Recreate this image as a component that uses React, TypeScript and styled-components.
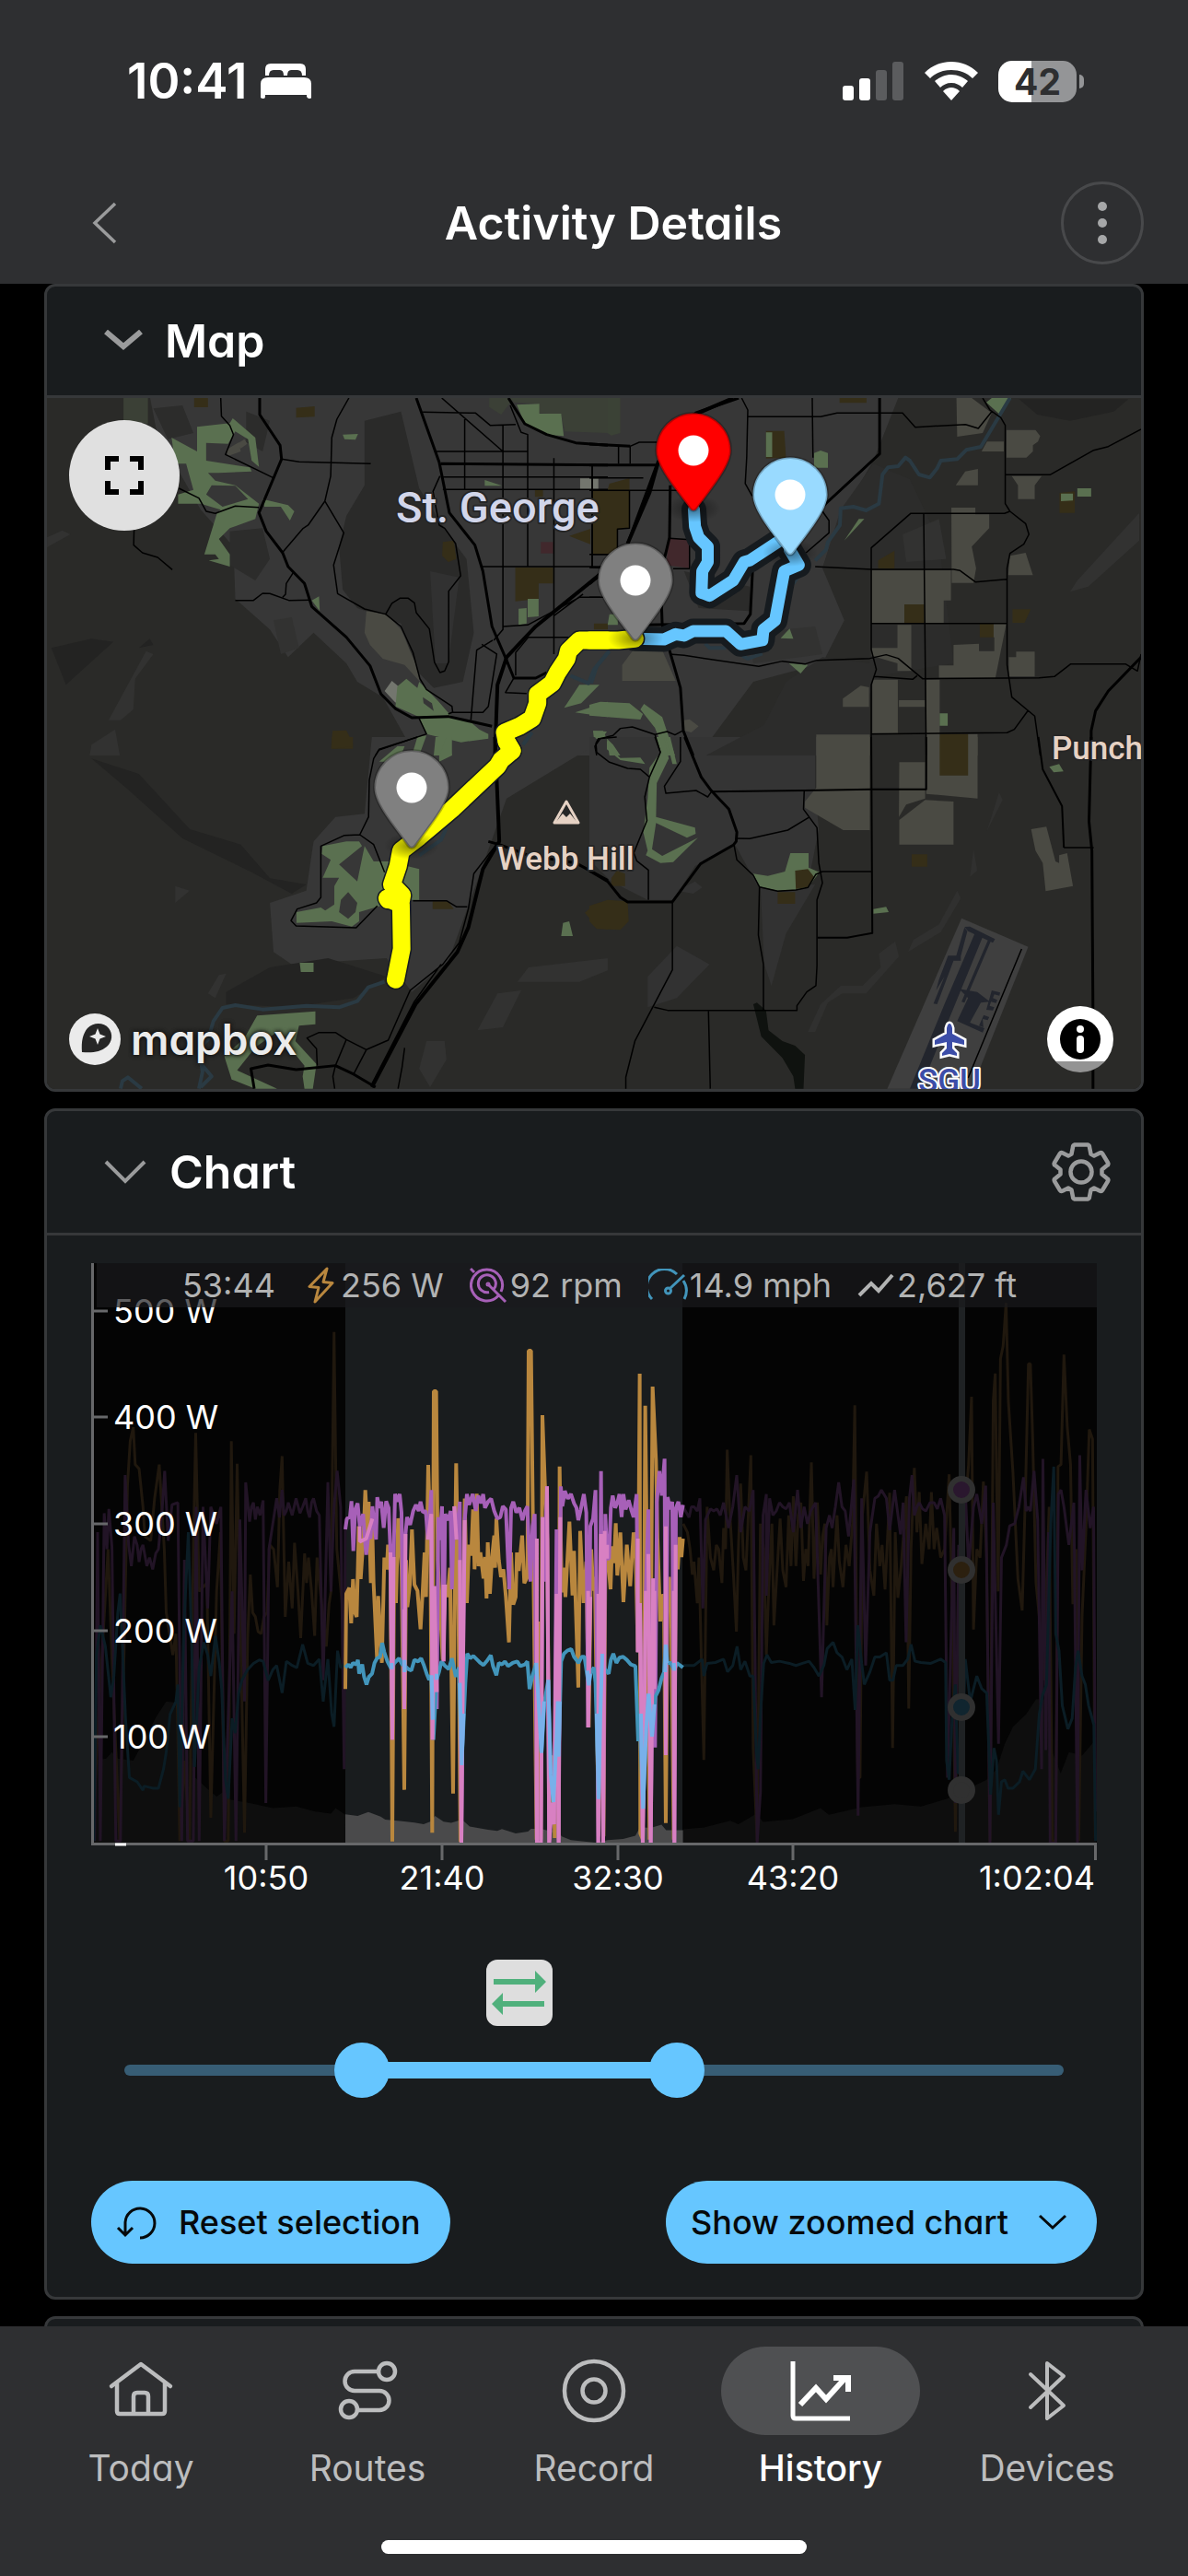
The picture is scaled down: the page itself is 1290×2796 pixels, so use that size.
import React, { useState } from "react";
import styled, { createGlobalStyle } from "styled-components";

const c = {
  bar: "#2e2f31",
  card: "#191c1e",
  line: "#36383a",
  accent: "#66c6ff",
  track: "#375d75",
  icon: "#9a9b9c",
  muted: "#bcbdbe",
  orange: "#b9873e",
  purple: "#a760b8",
  pink: "#d880c2",
  blue: "#4295bb",
  sky: "#79b0ea",
};

const GlobalStyle = createGlobalStyle`
  * { box-sizing: border-box; }
  body {
    margin: 0;
    background: #000;
    color: #fff;
    font-family: Inter, "Liberation Sans", sans-serif;
    font-feature-settings: "cv11";
  }
  button, input { font: inherit; font-feature-settings: inherit; color: inherit; }
  svg { display: block; flex: none; }
`;

/* ---------- page frame ---------- */

const Page = styled.div`
  display: flex;
  flex-direction: column;
  height: 100vh;
  overflow: hidden;
`;

const Header = styled.header`
  background: ${c.bar};
`;

const StatusBar = styled.div`
  display: flex;
  justify-content: space-between;
  align-items: center;
  height: 176px;
  padding: 0 113px 0 138px;
`;

const StatusGroup = styled.div<{ $gap: number }>`
  display: flex;
  align-items: center;
  gap: ${(p) => p.$gap}px;
`;

const Clock = styled.time`
  font-size: 53px;
  line-height: 60px;
  font-weight: 600;
`;

const Battery = styled.div`
  display: flex;
  align-items: center;
  gap: 3px;
`;

const BatteryBody = styled.div`
  display: grid;
  place-items: center;
  width: 85px;
  height: 45px;
  border-radius: 15px;
  background: linear-gradient(90deg, #fff 42%, #949597 42%);
  color: ${c.bar};
  font-size: 39px;
  line-height: 45px;
  font-weight: 700;
`;

const BatteryTip = styled.div`
  width: 5px;
  height: 15px;
  border-radius: 0 6px 6px 0;
  background: #949597;
`;

const TitleBar = styled.div`
  display: grid;
  grid-template-columns: 90px 1fr 90px;
  align-items: center;
  height: 132px;
  padding: 0 48px 0 90px;
`;

const BackButton = styled.button`
  justify-self: start;
  padding: 12px 9px;
  border: 0;
  background: none;
`;

const Title = styled.h1`
  margin: 0;
  text-align: center;
  font-size: 50px;
  line-height: 60px;
  font-weight: 600;
`;

const MoreButton = styled.button`
  display: grid;
  place-items: center;
  width: 90px;
  height: 90px;
  padding: 0;
  border: 3px solid #48494b;
  border-radius: 50%;
  background: none;
`;

const Content = styled.main`
  flex: 1;
  min-height: 0;
  display: flex;
  flex-direction: column;
  gap: 18px;
  padding: 0 48px;
  overflow: hidden auto;
  scrollbar-width: none;
`;

/* ---------- cards ---------- */

const Card = styled.section`
  flex: none;
  border: 3px solid ${c.line};
  border-radius: 12px;
  background: ${c.card};
  overflow: hidden;
`;

const NextCard = styled(Card)`
  height: 132px;
`;

const CardHeader = styled.div<{ $height: number; $gap: number }>`
  display: flex;
  align-items: center;
  gap: ${(p) => p.$gap}px;
  height: ${(p) => p.$height}px;
  padding: 0 33px 0 62px;
  border-bottom: 3px solid ${c.line};
`;

const CardTitle = styled.h2`
  flex: 1;
  margin: 0;
  font-size: 50px;
  line-height: 60px;
  font-weight: 600;
`;

const IconButton = styled.button`
  padding: 0;
  border: 0;
  background: none;
`;

/* ---------- map ---------- */

const MapFrame = styled.div`
  position: relative;
  height: 750px;
  background: #2a2a28;
`;

const MapSvg = styled.svg`
  width: 100%;
  height: 100%;
`;

const MapLabel = styled.text<{ $size: number }>`
  font-family: Roboto, sans-serif;
  font-size: ${(p) => p.$size}px;
  font-weight: 500;
  paint-order: stroke;
  stroke-width: 4px;
  stroke-linejoin: round;
`;

const FullscreenButton = styled.button`
  position: absolute;
  top: 24px;
  left: 24px;
  display: grid;
  place-items: center;
  width: 120px;
  height: 120px;
  padding: 0;
  border: 0;
  border-radius: 50%;
  background: #e0e0e0;
`;

const MapboxLogo = styled.a`
  position: absolute;
  left: 24px;
  bottom: 24px;
  display: flex;
  align-items: center;
  gap: 11px;
  color: #ebebeb;
  text-decoration: none;
  font-size: 46px;
  line-height: 60px;
  font-weight: 600;
  text-shadow: 0 0 5px #111, 0 0 5px #111;
`;

const InfoButton = styled.button`
  position: absolute;
  right: 30px;
  bottom: 18px;
  display: grid;
  place-items: center;
  width: 72px;
  height: 72px;
  padding: 0;
  border: 0;
  border-radius: 36px;
  background: linear-gradient(#fff 60px, #939393 60px);
`;

/* ---------- chart ---------- */

const ChartBody = styled.div`
  padding: 30px 48px 36px;
`;

const ChartFrame = styled.div`
  position: relative;
`;

const ChartSvg = styled.svg`
  width: 100%;
  height: auto;
`;

const AxisLabel = styled.text`
  fill: #fff;
  font-size: 36px;
`;

const Legend = styled.ul`
  position: absolute;
  top: 0;
  left: 6px;
  right: 0;
  display: flex;
  justify-content: center;
  align-items: center;
  gap: 28px;
  height: 48px;
  margin: 0;
  padding: 0 0 0 6px;
  list-style: none;
  background: rgba(25, 26, 28, 0.7);
  color: #b2b3b3;
  font-size: 36px;
  line-height: 48px;
`;

const LegendItem = styled.li<{ $gap: number }>`
  display: flex;
  align-items: center;
  gap: ${(p) => p.$gap}px;
  white-space: nowrap;
`;

const RangeArea = styled.div`
  padding: 56px 36px 90px;
`;

const SwapButton = styled.button`
  display: grid;
  place-items: center;
  width: 72px;
  height: 72px;
  padding: 0;
  border: 0;
  border-radius: 12px;
  background: #dedede;
`;

const DualRange = styled.div`
  position: relative;
  height: 60px;
  margin: 18px -30px 0;
`;

const Track = styled.div`
  position: absolute;
  inset: 24px 30px;
  border-radius: 6px;
  background: ${c.track};
`;

const TrackFill = styled.div`
  position: absolute;
  top: -3px;
  bottom: -3px;
  background: ${c.accent};
`;

const Range = styled.input`
  position: absolute;
  inset: 0;
  width: 100%;
  height: 60px;
  margin: 0;
  background: none;
  appearance: none;
  pointer-events: none;
  &::-webkit-slider-thumb {
    appearance: none;
    width: 60px;
    height: 60px;
    border: 0;
    border-radius: 50%;
    background: ${c.accent};
    pointer-events: auto;
  }
`;

const Actions = styled.div`
  display: flex;
  justify-content: space-between;
`;

const Pill = styled.button<{ $gap: number }>`
  display: flex;
  align-items: center;
  gap: ${(p) => p.$gap}px;
  height: 90px;
  padding: 0 32px 0 27px;
  border: 0;
  border-radius: 45px;
  background: ${c.accent};
  color: #06090b;
  font-size: 36px;
  line-height: 48px;
  font-weight: 500;
`;

/* ---------- bottom navigation ---------- */

const BottomNav = styled.nav`
  background: ${c.bar};
  padding: 22px 30px 24px;
`;

const NavList = styled.ul`
  display: grid;
  grid-template-columns: repeat(5, 1fr);
  margin: 0;
  padding: 0;
  list-style: none;
`;

const NavLink = styled.a<{ $active?: boolean }>`
  display: flex;
  flex-direction: column;
  align-items: center;
  gap: 12px;
  color: ${(p) => (p.$active ? "#fff" : c.muted)};
  text-decoration: none;
  font-size: 39px;
  line-height: 48px;
  font-weight: ${(p) => (p.$active ? 500 : 400)};
`;

const NavIcon = styled.span<{ $active?: boolean }>`
  display: grid;
  place-items: center;
  width: 216px;
  height: 96px;
  border-radius: 48px;
  background: ${(p) => (p.$active ? "#4f5052" : "transparent")};
`;

const HomeIndicator = styled.div`
  width: 462px;
  height: 15px;
  margin: 54px auto 0;
  border-radius: 8px;
  background: #fff;
`;

/* ---------- icons ---------- */

const Chevron = ({ w, h, sw, color }: { w: number; h: number; sw: number; color: string }) => (
  <svg width={w} height={h} viewBox={`0 0 ${w} ${h}`} fill="none" stroke={color} strokeWidth={sw}>
    <path d={`M2 2L${w / 2} ${h - sw}L${w - 2} 2`} />
  </svg>
);

const BedIcon = () => (
  <svg width="55" height="39" viewBox="0 0 55 39" fill="#fff">
    <path d="M5 13V6Q5 0 11 0H43Q49 0 49 6V13H45Q45 7 40 7H33Q29 7 29 13H25Q25 7 21 7H14Q9 7 9 13Z" />
    <path d="M0 37V22Q0 15 8 15H47Q55 15 55 22V37Q55 38 53 38T50 36V34H5V36Q5 38 3 38T0 37Z" />
  </svg>
);

const SignalIcon = () => (
  <svg width="67" height="43" viewBox="0 0 67 43" fill="#fff">
    <rect y="26" width="12" height="16" rx="3" />
    <rect x="18" y="18" width="12" height="24" rx="3" />
    <rect x="36" y="9" width="12" height="33" rx="3" fill="#5b5c5e" />
    <rect x="54" width="12" height="42" rx="3" fill="#5b5c5e" />
  </svg>
);

const WifiIcon = () => (
  <svg width="58" height="43" viewBox="0 0 58 43" fill="#fff">
    <path d="M29 0C18 0 8 4 0 12l6 6c6-6 14-9 23-9s17 3 23 9l6-6C50 4 40 0 29 0Z" />
    <path d="M29 14c-7 0-13 3-18 7l6 7c3-3 7-5 12-5s9 2 12 5l6-7c-5-4-11-7-18-7Z" />
    <path d="M29 28c-3 0-6 1-9 4l9 10 9-10c-3-3-6-4-9-4Z" />
  </svg>
);

const GearIcon = () => (
  <svg width="64" height="64" viewBox="0 0 64 64" fill="none" stroke={c.icon} strokeWidth="4.5" strokeLinejoin="round">
    <circle cx="32" cy="32" r="11.5" />
    <path d="M25 2.5H39Q41 3 41 5L42.5 12.5L46 14.5L52 11.5Q54 10.500 55 12L61 22Q62 24 60 25L54.500 29.500V34.500L60 39Q62 40 61 42L55 52Q54 53.500 52 52.500L46 49.500L42.500 51.500L41 59Q41 61 39 61.500H25Q23 61 23 59L21.500 51.500L18 49.500L12 52.500Q10 53.500 9 52L3 42Q2 40 4 39L9.500 34.500V29.500L4 25Q2 24 3 22L9 12Q10 10.500 12 11.500L18 14.500L21.500 12.500L23 5Q23 3 25 2.500Z" />
  </svg>
);

const BoltIcon = () => (
  <svg width="36" height="42" viewBox="-6 0 36 42" fill="none" stroke={c.orange} strokeWidth="3" strokeLinejoin="round">
    <path d="M22 3L3 22.500L13 23.500L9 39L28 18.500L18 17.500Z" />
  </svg>
);

const CadenceIcon = () => (
  <svg width="41" height="40" viewBox="0 0 41 40" fill="none" stroke={c.purple} strokeWidth="3">
    <path d="M31 31.500A17 17 0 1 1 34 27M26 24.500A9.500 9.500 0 1 0 21 27.500M1 2l4 4M20 19l19 19" />
    <circle cx="20" cy="19" r="1" />
  </svg>
);

const SpeedIcon = () => (
  <svg width="43" height="36" viewBox="0 0 43 36" fill="none" stroke={c.blue} strokeWidth="3">
    <path d="M4 33A19 19 0 0 1 31 6M38 13A20 20 0 0 1 39 33M24 21L39 7" />
    <circle cx="21.500" cy="24" r="3" />
  </svg>
);

const TrendIcon = () => (
  <svg width="40" height="28" viewBox="0 0 40 28" fill="none" stroke="#b2b3b3" strokeWidth="4">
    <path d="M2 25L15 12L23 20L38 3" />
  </svg>
);

const NavGlyph = ({ children }: { children: React.ReactNode }) => (
  <svg width="72" height="72" viewBox="0 0 72 72" fill="none" stroke="currentColor" strokeWidth="4.5" strokeLinecap="round" strokeLinejoin="round">
    {children}
  </svg>
);

/* ---------- map drawing ---------- */

const pinPath =
  "M27,13.5C27,19.07 20.25,27 14.75,34.5C14.02,35.5 12.98,35.5 12.25,34.5C6.75,27 0,19.22 0,13.5C0,6.04 6.04,0 13.5,0C20.96,0 27,6.04 27,13.5Z";

const Pin = ({ x, y, fill }: { x: number; y: number; fill: string }) => (
  <g transform={`translate(${x} ${y})`}>
    <ellipse cx="0" cy="63" rx="30" ry="15" fill="url(#pinShadow)" />
    <g transform="translate(-40.5 -40.5) scale(3)">
      <path d={pinPath} fill={fill} />
      <path d={pinPath} fill="none" stroke="#000" strokeOpacity="0.25" strokeWidth="1" />
      <circle cx="13.5" cy="13.5" r="5.5" fill="#fff" />
    </g>
  </g>
);

const tiles = {
  nw: "translate(-11 -12) scale(.3954 .3333)",
  ne: "translate(589 -12) scale(.3954 .3333)",
  sw: "translate(-11 368) scale(.3954 .3333)",
  se: "translate(589 368) scale(.3954 .3333)",
};
type TileId = keyof typeof tiles;

const land: [TileId, string, string][] = [
  ["nw", "#373737", "M310 30L330 150 450 400 540 520 545 690 640 790 690 880 760 800 850 900 880 960 950 1010 1040 1200H1568V30Z"],
  ["ne", "#373737", "M0 30H850L780 240 690 420 640 590 700 760 640 900 450 960 300 1200H0Z"],
  ["sw", "#373737", "M920 0L900 250 820 260 760 340 740 500 640 540 650 700 700 740 960 720 1030 830 1130 730 1200 500 1290 200 1568 0Z"],
  ["se", "#343434", "M0 0H620V170L630 300 600 480 460 480 400 350 290 420 230 530 160 530 60 470 0 400Z"],
  ["nw", "#2a2a29", "M900 110L1000 80 1050 330 1130 480 1180 560 1200 800 1170 960 1090 980 1040 920 1000 770 880 720 840 660 830 520 850 420 900 320Z"],
  ["nw", "#313131", "M1080 600L1160 620 1130 900 1095 900Z"],
  ["nw", "#2c2c2b", "M530 470L620 460 640 560 600 630 530 580ZM320 70L360 170 430 150 400 60ZM575 80L640 110 620 210 575 180Z"],
  ["nw", "#323231", "M300 860L320 870 270 950 265 1050 230 1085 197 1085ZM28 490L70 467 92 480 28 522ZM150 1165L215 1115 228 1200H145ZM650 760L700 750 720 850 670 870Z"],
  ["nw", "#232322", "M40 850L150 820 210 830 80 970ZM280 850L310 820 320 840Z"],
  ["ne", "#2c2c2b", "M640 590L770 590 770 900 640 880 540 960 480 1100 320 1200H770V1000L800 940 1000 900 960 500 880 300 780 250 690 400Z"],
  ["ne", "#323231", "M1340 630L1510 410V500L1370 650 1320 667ZM860 480L960 430 980 560 870 570ZM440 800L620 780 640 870 450 900Z"],
  ["ne", "#232322", "M1180 40H1480L1440 80 1320 110 1230 90Z"],
  ["sw", "#232322", "M150 70L280 120 420 300 560 350 640 460 740 480 700 510 590 440 400 330 250 170ZM520 830L640 750 800 720 960 780 870 850 700 880 520 870Z"],
  ["sw", "#323231", "M1320 797L1350 750 1568 720V760L1490 797ZM1210 955L1265 835 1330 825 1280 945ZM1050 1080L1070 990H1120L1125 1050 1080 1140ZM470 835L500 775 520 770 490 850ZM380 485L420 500 380 540Z"],
  ["se", "#30302f", "M875 700L890 660 960 610 1010 500 1020 525 965 635ZM600 960L635 870 690 810H750L800 750 795 705 840 665 850 715 760 835 695 835 655 865 620 960ZM1092 305L1125 180 1135 205ZM1045 455L1055 365 1065 435Z"],
  ["se", "#323232", "M160 780L240 680 330 740 240 850 160 880ZM470 490L620 480 540 640 500 810 480 740ZM240 500L290 470 310 490 285 510Z"],
  ["ne", "#2b2b2a", "M260 600L440 650 440 730 300 720Z"],
  ["ne", "#3b4236", "M0 36H85V150L60 158 35 138 0 145Z"],
  ["nw", "#3b4036", "M1300 36H1568V150L1450 145 1440 90 1380 85 1380 55 1310 50ZM238 36H305V120L238 110ZM1242 36H1310L1275 90 1242 65Z"],
  ["nw", "#4a4a43", "M905 730L960 740 1000 790 1040 900 1052 960 1010 905 950 885 915 840 900 800ZM520 205L555 180 560 210 525 225ZM550 185L570 170 578 185 560 200Z"],
  ["nw", "#73766e", "M1492 298H1542V333H1492ZM975 957L1008 990 985 1028 955 990Z"],
  ["nw", "#352e18", "M432 36H470V66H432ZM712 68L763 63V97L712 100ZM1527 340H1568V545H1527ZM1462 485L1520 462V512ZM1115 505L1145 500 1152 560 1130 570 1113 550ZM1314 588H1418V640H1378V690L1314 698ZM812 1120L850 1118 868 1160V1178H808ZM1368 335H1390V358H1368ZM1530 770H1568V790H1530Z"],
  ["nw", "#41282c", "M1384 505H1418V542H1384Z"],
  ["ne", "#352e18", "M7 340L50 335 55 315 110 297V460L77 465V545H7ZM687 36H761V52H687ZM500 143H535L540 230 485 233V143ZM1291 345L1333 340V410H1291ZM865 708H920V770H865ZM793 565L838 533V592L793 590ZM1072 770H1112V815H1072ZM1162 724H1212L1195 768H1162ZM962 1130H1040V1200H962Z"],
  ["ne", "#41282c", "M220 495H275V590L210 580Z"],
  ["ne", "#4a4a43", "M1008 36H1050L1105 85 1080 150 1010 162ZM1092 178H1138V210H1077ZM1145 140H1225L1238 160 1232 178 1218 190V210L1200 230H1145ZM1160 290H1242L1223 320V365H1177V320ZM1032 275L1067 267V320H1006ZM994 393H1060V415H1098V460L1050 520 1062 590 1055 638H995ZM775 597H993V695H973V768H920V708H865V768H775ZM1155 550L1198 540 1218 613H1150ZM1000 840L1070 836V860H1112V815H1110V770H1145L1115 947H960V907H1000ZM846 775H884V925H846V900L775 875V850H846ZM1152 880H1172V862H1223V943H1152ZM696 1015L745 973 768 978V1042H696ZM777 953H847V1127H777ZM850 1020H922V1042H850ZM925 953H962V1200H925ZM623 1132H770V1200H623ZM1040 1130H1066V1200H1040ZM90 905L120 857H200L237 957 90 957ZM258 1085L275 1082 300 1105 280 1125 258 1118Z"],
  ["nw", "#5a7050", "M440 130L530 118 538 102 600 165 610 260 590 240 580 170 545 145 525 185 465 182V240L585 262 590 275 500 280 470 280 490 305 545 320 610 380 600 430 530 460 500 495 530 545V585L472 565 500 560 490 545 460 545 495 410 505 400 450 380H388V350L430 335 410 250 380 250 370 165 440 210ZM620 365L690 385 707 405 695 435 670 390 625 390ZM1318 58L1380 55V87H1440L1447 160 1400 155 1340 120ZM1230 303L1278 322H1230ZM840 155L882 153 875 172 845 170ZM1348 690H1378V747L1348 750ZM1323 722L1345 720V770L1323 775ZM755 695L775 682 777 730ZM990 975L1015 950 1045 980 1050 960 1100 1020 1140 1075 1190 1090 1215 1115 1240 1130 1240 1145 1165 1157 1070 1130 1050 1075 985 1040ZM1095 1140L1130 1140 1140 1200H1090ZM1045 1140L1070 1135 1050 1200H1030ZM970 1200L995 1170H1010L1000 1200ZM1490 970H1545L1495 1030 1448 1045ZM1478 1060L1568 1025V1075ZM1528 1120H1555L1565 1145H1535Z"],
  ["nw", "#363636", "M480 320L545 322 580 365 510 390 465 350ZM1060 1010L1085 1030 1090 1055 1062 1030Z"],
  ["ne", "#5a7050", "M1105 36H1158L1125 88 1090 50ZM485 148H502V228H485ZM617 215L635 207 655 215V263H617ZM1295 347H1328V370L1295 372ZM1340 330H1378V357H1340ZM740 430H755L700 500ZM550 787L560 820 525 818ZM548 900L600 905 580 933ZM55 740H78V775H50ZM0 1035L30 1025 110 1030 147 1065 140 1083 0 1070ZM150 1032L200 1075 235 1200H210L180 1110 140 1050ZM962 1063H984V1103H962ZM10 1120L48 1122 35 1145 12 1140ZM48 1145L65 1165 85 1200H55Z"],
  ["sw", "#5a7050", "M785 355L850 340 885 340 893 355 830 415 880 470 900 355 925 405 965 405 1050 430V530H1000L885 570V600L865 617 810 600 713 605V570L780 555 792 565 817 545V485L830 458 785 458 807 400 782 380ZM722 735H760V765H725ZM605 907L765 893V935L720 940 710 990 768 1065 758 1145H735L730 1105 735 1070 660 960 600 1010 550 1085 660 1145H600L535 1115 515 1040 570 980ZM1445 605L1462 600 1472 648H1440ZM940 80L990 30H1010L975 80ZM1105 60L1125 0H1140V60L1105 80Z"],
  ["sw", "#363636", "M855 505L880 540 875 570 855 592 830 570 835 530Z"],
  ["sw", "#352e18", "M810 0H868V30L812 38ZM1087 535H1130L1145 560H1087ZM1505 572L1530 545 1568 535V627L1540 620Z"],
  ["se", "#4a4a43", "M623 0H770V303H697L592 230V210L623 165ZM851 82H922V200L870 220 850 260ZM928 0H1066V200L925 185ZM922 205L1000 210V350H851V270ZM1213 300L1255 292 1280 405 1290 410V385L1312 378 1328 485 1253 502 1245 410 1225 370Z"],
  ["se", "#352e18", "M962 0H1040V125H962ZM885 382H928V422H885ZM517 505H565V543H517ZM0 550L50 530 105 535 108 600 85 628 20 625 0 600ZM60 460L75 435 98 445V485H60Z"],
  ["se", "#5a7050", "M180 0L205 0 218 70 185 150 183 260 290 295 292 315 268 328 183 280 172 365 200 387 298 328 230 407 195 410 155 385 160 370 148 310 160 200 165 100 195 50ZM210 0H222L240 88H228ZM48 10L65 45 85 68 140 67 153 88 85 75 48 40ZM450 445L490 452 537 438 552 378H602V425L632 440 600 490 567 497 517 500 467 487ZM780 560L815 553 822 570 780 575ZM1263 97L1290 88 1302 112 1275 115Z"],
  ["se", "#352e18", "M565 435L600 430 617 455 600 488 567 495Z"],
  ["se", "#0f120f", "M450 870L460 865 485 890 492 955 530 990 565 1005 592 1035 588 1145H565L560 1105 530 1045 472 975Z"],
  ["se", "#3f3f3f", "M1022 590L1205 683 1050 1145H818Z"],
  ["se", "#22252d", "M1060 635L1082 645 925 1100 910 1145H880L975 870ZM1030 618L1045 617 1114 658 1108 670 1040 632ZM1095 660L1102 665 1030 865 1022 862ZM1030 620L1038 632 1018 722 1005 722ZM985 712H1020V728H1000L955 870 945 868 975 780 952 825 960 790ZM1015 820L1065 830 1100 862 1075 865 1045 930 1085 948 1080 962 1010 925 1040 850ZM1105 825L1128 832 1126 842 1112 838 1108 850 1120 856 1117 866 1103 862 1099 875 1112 880 1108 890 1090 888ZM1083 905L1098 912 1094 922 1080 918 1082 945 1070 940Z"],
];

const roads: [TileId, number, string][] = [
  ["nw", 3, "M612 36V90L668 190 672 235 610 410 630 470 675 540 690 585 735 640 755 715 850 815 915 908 945 1000 985 1048 1030 1077 1130 1073 1250 1105"],
  ["nw", 3, "M1042 36L1105 245 1133 410 1203 515 1225 600 1250 780 1290 890 1310 948H1370L1400 930M1295 36L1340 120 1400 155 1480 182 1568 190M1110 250L1568 254"],
  ["nw", 4, "M1568 590L1370 780 1290 880 1265 970 1258 1200"],
  ["nw", 1.5, "M505 36L507 95 530 125 540 155 518 220 648 295M672 235L720 244 917 250M857 36L824 105 810 165 807 290 791 372 843 475 815 580 826 673 900 723 958 740 975 705 997 688H1020L1037 703 1042 735 1078 788 1092 897 1107 930 1120 925 1131 895V665L1164 615 1150 510 1120 460 1105 450 1088 340 1107 290"],
  ["nw", 1.5, "M958 740L1000 780 1033 865 1052 950 1070 985 1140 1040 1142 1058M1130 1065L1140 1060H1225L1240 1040 1263 870 1222 838M1252 825L1208 857 1192 1085M791 372L745 450 730 462 676 537M704 605L685 640 683 675 675 685M545 695H595L620 672 640 673 692 695 750 694M267 465L266 515 290 540 332 555 372 595M390 330L445 362 465 405 490 412 545 388 610 392"],
  ["nw", 1.5, "M1060 82L1205 85 1245 125 1315 122M1112 36L1280 210M1095 210H1348V155L1330 148 1300 60M1175 100V333M1280 122V790L1255 825M1348 210V585M1420 232V870M1110 293H1568M1115 334H1568M1525 258V588M1222 585H1568M1280 780L1348 775 1490 685H1568M1525 545H1568M1568 815H1350L1315 865V940M1310 948L1287 995 1345 998M1420 745L1500 675M1050 1080L1070 1130 940 1182 930 1200"],
  ["ne", 3, "M797 36V218L640 390M222 320L220 490 210 540 195 600 200 775 250 980 258 1120 285 1200M0 186L112 193M0 254H185L105 510M150 775L425 770 442 740 448 600M1515 880L1425 990 1390 1055 1378 1120V1200M410 36L290 85"],
  ["ne", 4, "M395 36L280 95M190 240L165 345 105 510M0 640L50 590"],
  ["ne", 1.5, "M418 36L435 75 432 230 428 315 447 355M435 97H635L680 85H860L895 131 1033 122 1068 135 1105 80M612 36L614 230M1080 36L1100 75 1130 100 1142 125V380L1155 405 1198 445 1207 480 1193 512 1155 542 1147 590V905L1160 1010 1223 1072 1238 1200M1142 286H1265L1385 206 1425 194 1515 138M1155 405L1140 412H882L774 524V855L788 920 774 970V1200M918 412L925 1200M774 594 620 585M774 594H1000L1018 598 1060 635 1145 626M774 770H1145M640 405L658 435V475L595 540M220 870L260 874 465 910 530 893 593 902 625 890 770 884 815 872 848 884 915 950 1235 947 1277 943 1322 902H1472L1505 925 1515 870M783 943L888 952 900 940M774 1130L1147 1126 1167 1115 1205 1053M112 193L137 180H185M112 193V250M80 193V250M8 258V590M0 296H148M0 337H240M110 337V460L77 463V545H0M0 588 60 590M220 493L275 497V592H230M0 685H30M20 1200L15 1170 30 1145 65 1135 85 1112 118 1107 180 1132 213 1122 235 1133 255 1120M180 1132L195 1190"],
  ["sw", 4, "M1258 0L1270 340 1225 430 1210 500 1185 620 1155 700 1040 870 920 1140"],
  ["sw", 1.5, "M1262 350L1200 445 1185 560 1160 670 1115 740 1025 825 965 987 905 1018 850 985 820 962H775L742 980 768 1015 770 1070M850 985L820 1070 870 1098 905 1018M820 1070L813 1105 818 1145M1010 1012L1003 1075 992 1145M1110 740L1035 865 920 1130M1045 0L940 40 925 70 913 140 911 260 887 318 845 320 780 355V522L768 540 715 560 698 598 712 615 877 621 935 550M887 318L925 350 955 440M1033 533H1125L1153 553H1182"],
  ["sw", 3, "M1240 340L1270 350 1350 385 1480 410 1568 467M597 1145L588 1080 635 1068 712 1083 820 1070 870 1098 930 1140"],
  ["se", 3, "M262 0L307 130 335 175 383 235 405 310 403 340 395 352 305 413 228 537H105L85 522 50 470 0 435M1378 0L1372 275 1380 370 1383 900V1145"],
  ["se", 2, "M1303 360L1298 225 1245 105 1233 0M335 178L590 174 770 170H925V0M774 0L777 638 708 653H627"],
  ["se", 1.5, "M590 174L588 235 625 295 630 410 640 475 625 530V745L622 810 597 830 570 875V890H215L178 880M405 330L440 331 545 303 602 262M397 350L405 400 450 450 467 488 517 502 567 498 600 490 622 447 640 438H775M467 490L464 645 478 740V888M228 537V758L125 990 100 1108V1145M327 893L332 1145M1303 360H1385M162 530V433L130 403 122 377 158 272 152 195 165 130 140 105 105 102 55 82 20 50 18 20 25 5 75 0M165 130L195 50 180 0M335 178L325 195 293 174 210 183 206 160 250 80V0M1187 690L1040 1110"],
];

const water: [TileId, string][] = [
  ["ne", "M1155 36L1075 195 1035 205 1010 235 965 240 955 265 935 295 905 285 880 240 868 230 848 258 820 262 805 285 795 380 760 402 725 390 690 395 688 450 655 505 650 530 620 565M575 615L560 640M475 868L435 885 420 875M375 850H330L318 835M55 860L20 910 5 965"],
  ["nw", "M1568 865L1530 920 1515 965 1465 940M1360 1125L1335 1165"],
  ["sw", "M1350 0L1335 25M1125 295L1110 335 1050 385M955 797L910 815 880 860 830 880 740 875 620 887 545 873 510 882 485 925 470 985 445 1015 455 1090 445 1145M455 1070L480 1105 450 1140M230 1145L235 1120 250 1108 288 1145"],
];

const rideYellow: [TileId, string][] = [
  ["ne", "M125 820L80 825H0"],
  ["nw", "M1568 825H1490L1460 860 1455 885 1430 930 1415 965 1375 1000V1030L1360 1080 1325 1105 1285 1125 1290 1155 1305 1185"],
  ["sw", "M1290 15L1305 45 1275 75 1265 95 1140 235 1050 325 1000 370 992 420 975 480 1003 515 1000 535 965 530 962 525 1000 545 1002 690 985 790"],
];

const rideBlue =
  "M125 820L205 822 237 805 260 810 285 795H375L415 838 475 825 478 790 510 760 535 600 575 580 550 530M530 495L440 565 425 570 395 630 330 680 308 670 310 600 325 570V520L300 490 290 455 287 400";

const ActivityMap = () => (
  <MapSvg viewBox="0 0 1188 750" preserveAspectRatio="xMidYMid slice" role="img" aria-label="Route map of St. George">
    <defs>
      <radialGradient id="pinShadow">
        <stop offset="0" stopColor="#000" stopOpacity="0.45" />
        <stop offset="1" stopColor="#000" stopOpacity="0" />
      </radialGradient>
    </defs>
    <rect width="1188" height="750" fill="#2a2a28" />
    {land.map(([t, fill, d], i) => (
      <path key={i} transform={tiles[t]} d={d} fill={fill} />
    ))}
    <g fill="none" stroke="#2a3a43" strokeWidth="4" strokeLinejoin="round">
      {water.map(([t, d], i) => (
        <path key={i} transform={tiles[t]} d={d} vectorEffect="non-scaling-stroke" />
      ))}
    </g>
    <g fill="none" stroke="#000" strokeLinejoin="round">
      {roads.map(([t, w, d], i) => (
        <path key={i} transform={tiles[t]} d={d} strokeWidth={w} vectorEffect="non-scaling-stroke" />
      ))}
    </g>
    <g fill="none" strokeLinejoin="round" strokeLinecap="round">
      {[
        ["#161b1f", 27],
        ["#66c6ff", 13],
      ].map(([stroke, w]) => (
        <path key={stroke} transform={tiles.ne} d={rideBlue} stroke={stroke as string} strokeWidth={w} vectorEffect="non-scaling-stroke" />
      ))}
      {[
        ["#161b1f", 22],
        ["#ffff00", 19],
      ].map(([stroke, w]) =>
        rideYellow.map(([t, d]) => (
          <path key={stroke + t} transform={tiles[t]} d={d} stroke={stroke as string} strokeWidth={w} vectorEffect="non-scaling-stroke" />
        ))
      )}
    </g>
    <MapLabel $size={47} x="379" y="135" fill="#d2d6ea" stroke="#262626">St. George</MapLabel>
    <MapLabel $size={35} x="489" y="512" fill="#e6d2c4" stroke="#262626">Webb Hill</MapLabel>
    <MapLabel $size={35} x="1091" y="392" fill="#e6d2c4" stroke="#262626">Punch</MapLabel>
    <path d="M564 438L577 461H551Z" fill="#262626" stroke="#e6d2c4" strokeWidth="3" strokeLinejoin="round" />
    <path d="M552 461L560 451 564 455 568 451 576 461Z" fill="#e6d2c4" />
    <path
      d="M980 679Q982 679 983 684V690L996 697V702L983 699V706L988 711V714L980 712L972 714V711L977 706V699L964 702V697L977 690V684Q978 679 980 679Z"
      fill="#3c4da8"
      stroke="#fff"
      strokeWidth="5"
      paintOrder="stroke"
    />
    <MapLabel $size={35} x="946" y="753" fill="#3c4da8" stroke="#fff">SGU</MapLabel>
    <Pin x={702} y={57} fill="#ff0000" />
    <Pin x={807} y={105} fill="#99daff" />
    <Pin x={639} y={198} fill="#808080" />
    <Pin x={396} y={423} fill="#808080" />
  </MapSvg>
);

/* ---------- chart drawing ---------- */

type Series = { t: string; elevation: string; orange: string; purple: string; blue: string };

const before: Series = {
  t: "translate(-9 -11) scale(.4209 .4592)",
  elevation: "25 1200 60 1195 75 1180 90 1195 130 1200 165 1140 190 1095 215 1060 260 1065 275 1160 290 1240 320 1265 345 1285 360 1275 380 1292 430 1300 490 1312 550 1308 600 1320 640 1325 652 1312 677 1328 677 1396 25 1396",
  orange: "25 1390 40 1100 65 700 75 960 95 1390 105 1000 115 550 122 445 130 412 135 500 145 510 155 600 160 670 175 680 185 580 197 500 210 700 215 850 232 950 240 900 250 1390 262 1200 275 1390 285 700 291 425 300 800 320 780 330 1335 345 800 355 660 365 1390 375 1390 383 445 390 900 398 498 405 820 417 1370 425 910 432 760 438 850 445 860 452 895 460 900 467 860 475 850 482 690 492 700 502 790 508 560 514 480 522 860 531 730 540 840 546 685 555 800 562 910 572 710 577 780 582 720 590 800 598 905 604 720 608 760 615 820 628 930 635 830 640 800 648 187 655 700 668 820 677 950",
  purple: "30 1390 38 660 45 1390 55 615 62 700 67 605 75 695 85 1390 97 1390 109 525 118 690 125 740 133 670 140 690 145 730 150 700 155 690 165 740 172 720 180 748 188 710 195 700 205 600 211 515 220 680 230 595 245 590 255 1390 262 725 270 1390 285 1390 292 600 300 1390 310 600 322 840 330 600 345 640 356 600 365 1390 385 800 395 1390 405 630 417 1060 420 542 430 635 435 600 440 590 445 630 450 600 457 620 465 585 472 1300 480 700 490 640 500 580 507 625 514 560 519 620 525 610 530 590 540 620 550 580 560 615 567 600 575 580 580 610 585 625 590 590 595 580 603 610 610 620 620 1010 632 542 640 800 648 600 656 515 665 600 674 1220 677 630",
  blue: "28 1390 35 950 45 880 58 930 72 1050 80 1000 90 850 96 805 102 930 110 1100 120 1240 140 1250 155 1270 158 1260 180 1265 195 1265 208 1220 215 1180 225 1090 240 1060 245 1020 250 1310 260 900 272 660 280 900 288 1215 300 980 312 920 322 950 330 1000 342 905 352 970 358 1030 368 1245 375 1290 385 1100 393 1135 402 1040 410 1010 425 985 440 970 455 962 465 965 478 1010 490 985 500 975 514 1040 525 965 540 975 552 980 567 925 580 970 595 975 610 960 620 1060 632 960 642 1090 648 1120 657 940 665 980 677 970",
};

const selected: Series = {
  t: "translate(261 189) scale(.3333)",
  elevation: "45 1228 85 1233 120 1220 160 1235 175 1245 230 1250 270 1255 300 1260 325 1250 337 1233 365 1252 390 1256 425 1245 450 1268 510 1278 540 1282 555 1276 600 1290 640 1284 650 1275 680 1275 700 1280 735 1280 750 1300 780 1312 860 1320 900 1312 950 1308 990 1298 1005 1270 1040 1272 1075 1262 1090 1280 1145 1280 1145 1322 45 1322",
  orange: "45 820 48 510 58 490 64 606 70 462 76 570 82 585 89 290 95 462 104 325 110 172 118 320 121 210 128 475 132 265 137 475 148 718 152 517 164 735 172 392 180 430 184 350 192 440 198 1316 204 390 210 540 217 264 228 420 237 1148 243 400 247 553 255 480 262 300 270 480 280 500 290 625 297 500 303 375 308 520 315 90 322 330 328 1288 333 -150 341 -150 346 400 352 520 362 725 370 480 378 520 386 425 396 1160 403 330 406 85 412 400 420 1318 428 520 434 200 441 540 448 350 455 385 461 235 466 430 473 184 479 420 485 375 495 460 500 390 505 525 509 342 516 510 523 390 530 320 533 425 537 265 545 400 552 455 560 430 568 520 578 668 585 375 592 545 600 520 604 375 610 435 621 320 628 475 638 455 642 -282 650 -282 658 440 668 1310 675 600 682 1310 687 -72 695 150 703 330 710 1310 716 1045 722 1040 727 1305 733 640 740 1310 743 95 750 505 757 425 762 520 775 275 785 515 790 370 804 815 810 305 821 540 830 405 838 945 846 365 853 500 858 455 870 1300 880 560 886 1300 893 305 900 390 909 495 914 355 920 410 926 280 931 450 941 310 951 537 962 350 973 485 984 310 990 350 998 700 1004 -207 1006 1290 1014 1310 1022 -103 1030 610 1036 1310 1046 -165 1057 75 1062 330 1071 600 1077 512 1083 525 1089 1256 1095 520 1100 455 1106 512 1115 1310 1122 375 1128 430 1134 325 1140 390 1145 330",
  purple: "45 300 50 265 60 260 65 208 71 370 77 235 85 215 92 290 103 250 110 350 113 383 120 320 127 330 133 225 145 333 149 195 155 230 162 210 170 295 178 208 186 230 192 375 198 985 202 390 207 185 215 210 222 185 228 245 237 885 241 315 246 260 256 285 266 240 275 220 284 240 290 210 298 245 307 240 314 333 318 300 325 172 329 985 335 485 343 885 348 260 352 335 360 225 365 730 370 250 380 270 388 240 392 495 400 225 407 333 413 260 418 210 423 1322 430 600 434 270 441 185 448 220 460 185 470 240 478 190 487 215 494 185 500 230 510 210 520 200 530 240 540 265 550 260 558 225 568 235 579 495 585 230 592 210 602 245 612 230 622 270 630 240 638 225 648 470 655 290 662 250 669 1322 682 1322 688 260 692 470 702 160 709 1322 718 1190 725 1260 733 300 740 1322 747 160 752 225 760 175 770 200 780 185 790 215 798 230 804 270 812 235 822 185 830 245 836 945 843 290 852 265 860 172 869 1322 878 110 885 1322 892 250 898 395 904 395 910 230 916 190 924 230 932 210 938 185 945 260 951 185 958 235 968 205 976 235 984 260 994 185 998 700 1005 540 1014 1322 1024 500 1032 235 1040 1322 1048 460 1054 1010 1060 210 1068 110 1076 190 1085 70 1089 1035 1095 195 1103 235 1110 210 1117 1322 1122 230 1130 210 1138 260 1145 220",
  blue: "45 750 55 740 62 750 70 735 80 740 86 725 90 770 100 740 106 780 114 805 122 780 132 770 140 735 148 720 158 715 165 670 172 700 182 730 195 755 205 735 220 720 230 740 240 745 250 755 260 760 270 725 282 730 292 720 300 740 310 770 318 790 325 775 332 985 342 790 350 765 358 730 370 745 382 755 392 720 405 780 415 750 424 1068 436 800 442 705 452 720 462 712 475 725 485 735 495 742 505 730 519 710 526 745 537 775 545 735 555 740 565 730 575 745 590 735 605 730 615 745 630 740 638 730 645 820 655 775 667 735 675 900 684 1028 694 860 706 790 714 1100 723 1188 733 980 737 860 740 1040 748 730 757 705 768 695 781 690 790 715 805 735 815 715 824 715 832 770 838 808 845 765 855 750 860 800 870 1178 876 900 882 705 890 755 903 770 910 725 918 705 928 735 938 718 950 715 962 725 975 740 990 745 999 990 1003 900 1015 1210 1025 950 1033 835 1044 975 1055 845 1065 825 1075 785 1083 765 1089 675 1094 735 1105 735 1117 760 1125 735 1145 750",
};

const after: Series = {
  t: "translate(601 -11) scale(.3571 .4592)",
  elevation: "117 1362 180 1358 260 1342 285 1350 340 1325 360 1345 450 1338 535 1312 560 1328 660 1310 760 1303 840 1308 920 1290 960 1275 1040 1245 1070 1220 1095 1160 1120 1120 1160 1090 1190 1055 1225 1055 1240 1180 1265 1230 1290 1180 1330 1188 1372 1150 1372 1396 117 1396",
  orange: "117 640 130 660 138 700 145 760 150 730 160 828 165 720 180 1198 190 600 200 720 210 750 218 690 225 700 235 780 240 650 246 700 251 465 258 600 270 760 279 895 285 700 292 545 300 720 308 750 323 478 330 1170 342 1390 352 640 362 700 370 950 378 780 387 640 393 880 402 760 412 628 420 750 430 790 438 620 445 740 452 575 460 740 467 620 475 590 483 775 490 700 497 740 507 495 515 770 525 590 535 760 541 670 548 640 554 880 562 720 568 700 573 790 579 700 585 620 592 730 603 790 612 690 622 740 632 640 639 360 648 1240 655 1240 662 620 675 517 685 750 697 810 705 640 715 740 722 690 731 795 745 567 754 1170 762 660 770 815 780 740 796 575 803 1077 810 700 820 508 828 660 835 565 843 735 855 640 865 700 872 565 880 700 888 650 900 720 912 700 926 523 935 840 945 1368 955 700 965 750 975 600 985 500 994 340 1000 890 1010 700 1020 720 1030 540 1040 720 1050 1390 1060 350 1066 285 1075 800 1082 250 1090 220 1099 118 1106 350 1120 520 1135 770 1148 845 1158 560 1167 262 1173 262 1180 440 1190 780 1200 860 1212 1010 1230 600 1240 1390 1250 1390 1257 505 1266 500 1275 240 1285 410 1295 500 1302 830 1312 700 1320 1390 1330 860 1342 650 1352 417 1362 440 1370 1383",
  purple: "117 600 135 625 142 600 150 600 160 610 168 580 177 840 185 630 200 605 210 610 220 605 230 620 240 590 255 650 268 600 280 525 292 660 305 600 318 610 330 560 342 1395 352 1275 360 620 370 570 370 810 380 580 390 620 400 610 410 590 420 600 430 605 440 590 452 660 465 560 475 650 485 600 495 640 505 610 512 600 520 590 538 1050 552 650 562 620 570 650 580 600 590 542 600 600 610 610 620 670 636 535 649 1330 660 580 672 975 685 660 700 580 710 575 720 560 735 580 745 655 760 560 778 665 786 590 795 920 805 580 813 525 820 620 828 600 835 590 845 605 855 610 868 590 880 590 890 605 900 580 912 620 921 1240 930 960 940 650 945 1300 955 690 960 885 975 560 985 740 1000 600 1010 570 1025 640 1037 550 1050 1395 1060 590 1076 1160 1085 720 1100 690 1110 645 1125 640 1138 600 1152 530 1160 610 1165 600 1173 610 1184 515 1195 630 1207 1220 1211 487 1220 1175 1228 660 1233 1395 1250 1395 1258 570 1266 560 1275 600 1290 690 1305 590 1316 1395 1323 478 1330 750 1342 560 1355 650 1365 600 1371 1320",
  blue: "117 975 150 975 175 960 180 1000 190 970 215 968 240 960 252 990 268 975 281 930 292 985 305 965 320 1000 330 1000 340 1180 345 1220 353 1080 362 970 372 950 385 968 410 965 440 970 460 975 480 970 500 965 515 980 530 1000 545 975 555 935 573 920 585 945 600 955 615 985 630 960 640 1080 648 880 660 970 668 1020 685 990 700 955 715 955 735 945 745 1010 755 1010 765 975 785 975 800 960 810 925 822 965 840 968 870 970 900 960 915 968 918 1200 926 1245 935 1100 945 1020 953 1230 963 1225 975 960 990 1060 1010 1000 1025 1030 1040 1040 1052 1280 1062 1170 1070 1200 1076 1328 1085 1250 1095 1245 1105 1265 1120 1265 1140 1250 1150 1225 1170 1245 1188 1220 1200 1090 1210 1045 1222 1020 1235 640 1244 505 1250 900 1260 940 1270 1070 1287 1125 1300 1100 1310 980 1318 940 1330 1000 1340 1020 1350 1070 1366 1115 1371 1390",
};

/* Where cadence and power, or speed and cadence, fall together. */
const pinkDrops =
  "M92 290V340L113 330 133 265M192 375L198 985 202 390M237 560V885L241 315M314 333L325 250 329 985 335 485 343 830M365 480V730L370 480M400 225L407 333M418 400L423 1322 430 600 434 270M669 330V1322H682L688 260M702 160L709 1322 718 1190 725 1260 733 510 740 1322 745 260M733 640V1100M836 500V945L843 520M869 510V1322L878 315 885 1322 890 305M898 350V395M998 330V700L1005 540 1014 1322 1024 500M1032 380L1040 1322 1048 460M1052 500V820M1089 290V1035M1115 500L1117 1322 1121 350";
const skyDrops =
  "M196 735V755M238 725V765M326 775L330 920M342 790V770M418 800L424 1068 430 900M667 735L684 1028 692 860M706 790L714 1100 723 1188 733 980 737 860 740 1040 744 860M834 760L838 808 842 770M864 900L870 1178 876 900 882 705M1008 900L1015 1210 1025 950 1033 835 1044 975 1052 870M1087 765L1089 675 1092 735M1115 735L1117 760";

const SeriesGroup = ({ s, dim }: { s: Series; dim?: boolean }) => {
  const lines: [string, string][] = [
    [s.orange, dim ? "#20180e" : c.orange],
    [s.purple, dim ? "#221426" : c.purple],
    [s.blue, dim ? "#0b1d25" : c.blue],
  ];
  return (
    <g transform={s.t} fill="none" strokeWidth={dim ? 3 : 4}>
      <polygon points={s.elevation} fill={dim ? "#0e0e0e" : "#4a4a4b"} />
      {lines.map(([points, stroke]) => (
        <polyline key={stroke} points={points} stroke={stroke} strokeLinejoin="bevel" vectorEffect="non-scaling-stroke" />
      ))}
      {!dim && <path d={pinkDrops} stroke={c.pink} strokeLinejoin="bevel" vectorEffect="non-scaling-stroke" />}
      {!dim && <path d={skyDrops} stroke={c.sky} strokeLinejoin="bevel" vectorEffect="non-scaling-stroke" />}
    </g>
  );
};

const watts = [500, 400, 300, 200, 100];
const wattY = (w: number) => Math.round(629 - w * 1.157);
const times: [string, number][] = [
  ["10:50", 190],
  ["21:40", 381],
  ["32:30", 572],
  ["43:20", 762],
];
const cursor: [number, string][] = [
  [246, "#2a172e"],
  [333, "#2c200f"],
  [482, "#10252f"],
  [572, "#303030"],
];

const Chart = () => (
  <ChartSvg viewBox="0 0 1092 700" role="img" aria-label="Power, cadence, speed and elevation over time">
    <rect width="276" height="629" fill="#040404" />
    <rect x="642" width="450" height="629" fill="#040404" />
    <SeriesGroup s={before} dim />
    <SeriesGroup s={after} dim />
    <SeriesGroup s={selected} />
    <rect x="942" width="7" height="629" fill="#1f2224" />
    {cursor.map(([y, fill]) => (
      <circle key={y} cx="945" cy={y} r="12" fill={fill} stroke="#303030" strokeWidth="6" />
    ))}
    <g stroke="#67686a" strokeWidth="3" fill="none">
      <path d="M1.500 0V630.500H1092" />
      {watts.map((w) => (
        <path key={w} d={`M2 ${wattY(w) + 1}H18`} />
      ))}
      {times.map(([t, x]) => (
        <path key={t} d={`M${x} 630V648`} />
      ))}
      <path d="M1090.500 630V648" />
    </g>
    {watts.map((w) => (
      <AxisLabel key={w} x="24" y={wattY(w) + 14}>
        {w} W
      </AxisLabel>
    ))}
    <path d="M26 631H38" stroke="#fff" strokeWidth="3" />
    {times.map(([t, x]) => (
      <AxisLabel key={t} x={x} y="680" textAnchor="middle">
        {t}
      </AxisLabel>
    ))}
    <AxisLabel x="1090" y="680" textAnchor="end">
      1:02:04
    </AxisLabel>
  </ChartSvg>
);

const SelectionRange = () => {
  const [range, setRange] = useState({ from: 253, to: 588 });
  const from = range.from / 10;
  const to = range.to / 10;
  return (
    <RangeArea>
      <SwapButton aria-label="Move selection" style={{ marginLeft: `calc(${(from + to) / 2}% - 36px)` }}>
        <svg width="60" height="48" viewBox="0 0 60 48" fill="#50b07c">
          <path d="M2 9H47V0L59 12L47 24V15H2ZM57 33H12V24L0 36L12 48V39H57Z" />
        </svg>
      </SwapButton>
      <DualRange>
        <Track>
          <TrackFill style={{ left: `${from}%`, right: `${100 - to}%` }} />
        </Track>
        <Range
          type="range"
          aria-label="Selection start"
          min={0}
          max={1000}
          value={range.from}
          onChange={(e) => setRange({ ...range, from: Math.min(+e.target.value, range.to) })}
        />
        <Range
          type="range"
          aria-label="Selection end"
          min={0}
          max={1000}
          value={range.to}
          onChange={(e) => setRange({ ...range, to: Math.max(+e.target.value, range.from) })}
        />
      </DualRange>
    </RangeArea>
  );
};

/* ---------- navigation items ---------- */

const navItems: { label: string; icon: React.ReactNode; active?: boolean }[] = [
  {
    label: "Today",
    icon: <path d="M4 31L36 7L68 31M10 28V58Q10 61 13 61H59Q62 61 62 58V28M28 61V42Q28 38 32 38H40Q44 38 44 42V61" />,
  },
  {
    label: "Routes",
    icon: (
      <>
        <circle cx="57" cy="15" r="9" />
        <circle cx="16" cy="56" r="9" />
        <path d="M48 15H22A10.500 10.500 0 0 0 22 36H49A10.500 10.500 0 0 1 49 57H25" />
      </>
    ),
  },
  {
    label: "Record",
    icon: (
      <>
        <circle cx="36" cy="36" r="32" />
        <circle cx="36" cy="36" r="12.500" />
      </>
    ),
  },
  {
    label: "History",
    active: true,
    icon: (
      <g strokeLinecap="butt" strokeLinejoin="miter">
        <path d="M6 4V63Q6 66 9 66H68" strokeWidth="5" />
        <path d="M14 51L31 33L42 45L62 23M50 22H66V37" strokeWidth="6" />
      </g>
    ),
  },
  { label: "Devices", icon: <path d="M18 18L54 52L36 66V6L54 20L18 54" strokeWidth="4" /> },
];

export default function App() {
  return (
    <>
      <GlobalStyle />
      <Page>
        <Header>
          <StatusBar>
            <StatusGroup $gap={15}>
              <Clock>10:41</Clock>
              <BedIcon />
            </StatusGroup>
            <StatusGroup $gap={22}>
              <SignalIcon />
              <WifiIcon />
              <Battery>
                <BatteryBody>42</BatteryBody>
                <BatteryTip />
              </Battery>
            </StatusGroup>
          </StatusBar>
          <TitleBar>
            <BackButton aria-label="Back">
              <svg width="28" height="48" viewBox="0 0 28 48" fill="none" stroke={c.icon} strokeWidth="3.500">
                <path d="M26 3L4 24L26 45" />
              </svg>
            </BackButton>
            <Title>Activity Details</Title>
            <MoreButton aria-label="More options">
              <svg width="10" height="48" viewBox="0 0 10 48" fill="#a6a7a8">
                <circle cx="5" cy="6" r="5" />
                <circle cx="5" cy="24" r="5" />
                <circle cx="5" cy="42" r="5" />
              </svg>
            </MoreButton>
          </TitleBar>
        </Header>

        <Content>
          <Card>
            <CardHeader $height={121} $gap={24}>
              <IconButton aria-label="Collapse map">
                <Chevron w={42} h={24} sw={6} color={c.icon} />
              </IconButton>
              <CardTitle>Map</CardTitle>
            </CardHeader>
            <MapFrame>
              <ActivityMap />
              <FullscreenButton aria-label="Full screen">
                <svg width="42" height="42" viewBox="0 0 42 42" fill="none" stroke="#000" strokeWidth="6">
                  <path d="M3 15V3H15M27 3H39V15M39 27V39H27M15 39H3V27" />
                </svg>
              </FullscreenButton>
              <MapboxLogo href="#mapbox">
                <svg width="56" height="56" viewBox="0 0 56 56">
                  <circle cx="28" cy="28" r="28" fill="#ebebeb" />
                  <path d="M14 42C13 30 15 22 20 16C27 9 38 10 43 16C48 22 47 31 41 36C34 42 25 43 14 42Z" fill="#262626" />
                  <path d="M31 16L33.500 22.500L40 25L33.500 27.500L31 34L28.500 27.500L22 25L28.500 22.500Z" fill="#ebebeb" />
                </svg>
                mapbox
              </MapboxLogo>
              <InfoButton aria-label="Map information">
                <svg width="44" height="44" viewBox="0 0 44 44">
                  <circle cx="22" cy="22" r="22" fill="#000" />
                  <circle cx="22" cy="11" r="4" fill="#fff" />
                  <rect x="18" y="18" width="8" height="19" rx="4" fill="#fff" />
                </svg>
              </InfoButton>
            </MapFrame>
          </Card>

          <Card>
            <CardHeader $height={135} $gap={25}>
              <IconButton aria-label="Collapse chart">
                <Chevron w={46} h={27} sw={4} color={c.icon} />
              </IconButton>
              <CardTitle>Chart</CardTitle>
              <IconButton aria-label="Chart settings">
                <GearIcon />
              </IconButton>
            </CardHeader>
            <ChartBody>
              <ChartFrame>
                <Chart />
                <Legend>
                  <LegendItem $gap={0}>53:44</LegendItem>
                  <LegendItem $gap={7}>
                    <BoltIcon />
                    256 W
                  </LegendItem>
                  <LegendItem $gap={3}>
                    <CadenceIcon />
                    92 rpm
                  </LegendItem>
                  <LegendItem $gap={2}>
                    <SpeedIcon />
                    14.9 mph
                  </LegendItem>
                  <LegendItem $gap={3}>
                    <TrendIcon />
                    2,627 ft
                  </LegendItem>
                </Legend>
              </ChartFrame>
              <SelectionRange />
              <Actions>
                <Pill $gap={24}>
                  <svg width="44" height="40" viewBox="0 0 44 40" fill="none" stroke="#06090b" strokeWidth="3">
                    <path d="M10 34V20A16 16 0 1 1 26 37M2 26L10 34L18 26" />
                  </svg>
                  Reset selection
                </Pill>
                <Pill $gap={32}>
                  Show zoomed chart
                  <Chevron w={32} h={18} sw={3} color="#06090b" />
                </Pill>
              </Actions>
            </ChartBody>
          </Card>

          <NextCard aria-hidden="true" />
        </Content>

        <BottomNav>
          <NavList>
            {navItems.map(({ label, icon, active }) => (
              <li key={label}>
                <NavLink href={`#${label.toLowerCase()}`} $active={active} aria-current={active ? "page" : undefined}>
                  <NavIcon $active={active}>
                    <NavGlyph>{icon}</NavGlyph>
                  </NavIcon>
                  {label}
                </NavLink>
              </li>
            ))}
          </NavList>
          <HomeIndicator />
        </BottomNav>
      </Page>
    </>
  );
}
